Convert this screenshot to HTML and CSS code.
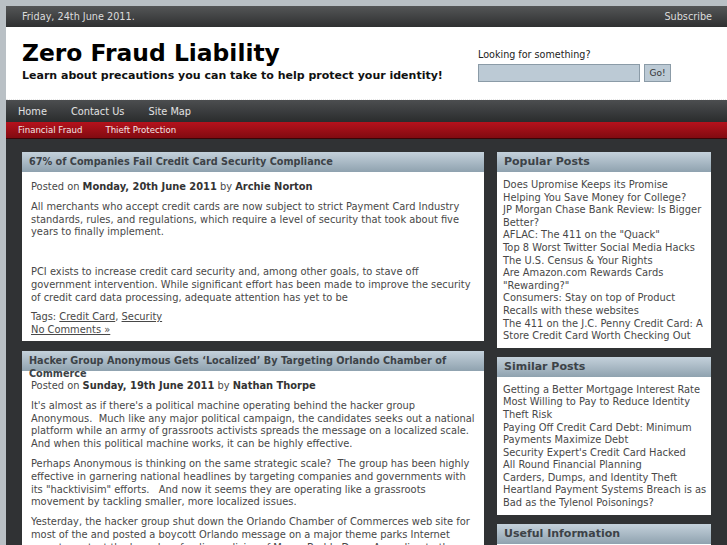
FILE: index.html
```html
<!DOCTYPE html>
<html lang="en">
<head>
  <meta charset="UTF-8">
  <title>Zero Fraud Liability</title>
  <link rel="stylesheet" href="styles.css">
</head>
<body>
  <div id="page">
    <!-- top bar -->
    <div class="topbar">
      <span>Friday, 24th June 2011.</span>
      <a href="#">Subscribe</a>
    </div>

    <!-- header -->
    <div class="header">
      <div class="branding">
        <h1>Zero Fraud Liability</h1>
        <p class="tagline">Learn about precautions you can take to help protect your identity!</p>
      </div>
      <form class="search">
        <label for="s">Looking for something?</label>
        <div class="search-row">
          <input type="text" id="s">
          <button type="button">Go!</button>
        </div>
      </form>
    </div>

    <!-- menus -->
    <div class="nav">
      <a href="#">Home</a>
      <a href="#">Contact Us</a>
      <a href="#">Site Map</a>
    </div>
    <div class="subnav">
      <a href="#">Financial Fraud</a>
      <a href="#">Thieft Protection</a>
    </div>

    <div class="main">
      <div class="posts">
        <div class="post">
          <h2>67% of Companies Fail Credit Card Security Compliance</h2>
          <div class="post-body">
            <p class="meta">Posted on <b>Monday, 20th June 2011</b> by <b>Archie Norton</b></p>
            <p>All merchants who accept credit cards are now subject to strict Payment Card Industry standards, rules, and regulations, which require a level of security that took about five years to finally implement.</p>
            <p>&nbsp;</p>
            <p>PCI exists to increase credit card security and, among other goals, to stave off government intervention. While significant effort has been made to improve the security of credit card data processing, adequate attention has yet to be</p>
            <p class="tags">Tags: <a href="#">Credit Card</a>, <a href="#">Security</a><br><a href="#">No Comments &raquo;</a></p>
          </div>
        </div>

        <div class="post">
          <h2>Hacker Group Anonymous Gets &lsquo;Localized&rsquo; By Targeting Orlando Chamber of Commerce</h2>
          <div class="post-body">
            <p class="meta">Posted on <b>Sunday, 19th June 2011</b> by <b>Nathan Thorpe</b></p>
            <p>It's almost as if there's a political machine operating behind the hacker group Anonymous.&nbsp; Much like any major political campaign, the candidates seeks out a national platform while an army of grassroots activists spreads the message on a localized scale.&nbsp; And when this political machine works, it can be highly effective.</p>
            <p>Perhaps Anonymous is thinking on the same strategic scale?&nbsp; The group has been highly effective in garnering national headlines by targeting companies and governments with its "hacktivisim" efforts.&nbsp;&nbsp; And now it seems they are operating like a grassroots movement by tackling smaller, more localized issues.</p>
            <p>Yesterday, the hacker group shut down the Orlando Chamber of Commerces web site for most of the and posted a boycott Orlando message on a major theme parks Internet page to protect the homeless feeding policies of Mayor Buddy Dyer.&nbsp; According to the</p>
          </div>
        </div>
      </div>

      <div class="sidebar">
        <div class="widget">
          <h3>Popular Posts</h3>
          <ul>
            <li><a href="#">Does Upromise Keeps its Promise Helping You Save Money for College?</a></li>
            <li><a href="#">JP Morgan Chase Bank Review: Is Bigger Better?</a></li>
            <li><a href="#">AFLAC: The 411 on the "Quack"</a></li>
            <li><a href="#">Top 8 Worst Twitter Social Media Hacks</a></li>
            <li><a href="#">The U.S. Census &amp; Your Rights</a></li>
            <li><a href="#">Are Amazon.com Rewards Cards "Rewarding?"</a></li>
            <li><a href="#">Consumers: Stay on top of Product Recalls with these websites</a></li>
            <li><a href="#">The 411 on the J.C. Penny Credit Card: A Store Credit Card Worth Checking Out</a></li>
          </ul>
        </div>
        <div class="widget">
          <h3>Similar Posts</h3>
          <ul>
            <li><a href="#">Getting a Better Mortgage Interest Rate</a></li>
            <li><a href="#">Most Willing to Pay to Reduce Identity Theft Risk</a></li>
            <li><a href="#">Paying Off Credit Card Debt: Minimum Payments Maximize Debt</a></li>
            <li><a href="#">Security Expert's Credit Card Hacked</a></li>
            <li><a href="#">All Round Financial Planning</a></li>
            <li><a href="#">Carders, Dumps, and Identity Theft</a></li>
            <li><a href="#">Heartland Payment Systems Breach is as Bad as the Tylenol Poisonings?</a></li>
          </ul>
        </div>
        <div class="widget">
          <h3>Useful Information</h3>
          <ul>
            <li><a href="#">About Zero Fraud Liability</a></li>
          </ul>
        </div>
      </div>
    </div>
  </div>
</body>
</html>
```

FILE: styles.css
```css
/* === base === */
html {
  overflow: hidden;
}

body {
  margin: 6px 0 0 6px;
  background: #b9c0c5;
  font-family: 'DejaVu Sans', sans-serif;
  font-size: 9.9px;
  color: #484848;
}

a {
  color: inherit;
  text-decoration: none;
}

#page {
  width: 760px;
  background: #303234;
}

/* === top bar === */
.topbar {
  height: 21px;
  display: flex;
  align-items: center;
  justify-content: space-between;
  padding: 0 54px 0 16px;
  background: linear-gradient(#545657, #2f3031);
  color: #dcdcdc;
  font-size: 9.7px;
}

/* === header === */
.header {
  height: 72px;
  background: #fff;
  border-bottom: 1px dotted #e6e6e6;
  display: flex;
  justify-content: space-between;
  padding: 0 46px 0 16px;
}

.branding h1 {
  margin: 13px 0 0;
  font-size: 23.4px;
  line-height: 27px;
  color: #000;
}

.tagline {
  margin: 2px 0 0;
  font-size: 11px;
  font-weight: bold;
  color: #111;
}

.search {
  width: 200px;
  padding-top: 22px;
  margin-right: 42px;
}

.search label {
  display: block;
  font-size: 9.6px;
  color: #222;
  margin-bottom: 4px;
}

.search-row {
  display: flex;
  gap: 4px;
}

.search input {
  width: 162px;
  height: 18px;
  box-sizing: border-box;
  margin: 0;
  border: 1px solid #8b9ba7;
  background: #bccad5;
}

.search button {
  height: 18px;
  width: 27px;
  padding: 0;
  border: 1px solid #8b9ba7;
  background: #bccad5;
  font-family: 'DejaVu Sans', sans-serif;
  font-size: 9px;
  color: #333;
}

/* === menus === */
.nav {
  height: 22px;
  display: flex;
  align-items: center;
  gap: 24px;
  padding-left: 12px;
  background: linear-gradient(#4c4e50, #2a2c2d);
  font-size: 9.8px;
}

.nav a {
  color: #e2e2e2;
}

.subnav {
  height: 16px;
  display: flex;
  align-items: center;
  gap: 23px;
  padding-left: 12px;
  background: linear-gradient(#b5121c, #820b11);
  border-bottom: 1px solid #3a0508;
  font-size: 8.6px;
}

.subnav a {
  color: #f3e6e6;
}

/* === main columns === */
.main {
  display: flex;
  gap: 13px;
  padding: 13px 0 0 16px;
  align-items: flex-start;
}

.posts {
  width: 462px;
  display: flex;
  flex-direction: column;
  gap: 10px;
}

.post h2,
.widget h3 {
  margin: 0;
  height: 20px;
  box-sizing: border-box;
  background: linear-gradient(#c4d1db, #8fa2af);
  color: #3c4247;
}

.post h2 {
  padding: 3px 7px 0;
  font-size: 9.7px;
  line-height: 13px;
}

.post-body {
  background: #fff;
  padding: 9px 9px 4px;
  line-height: 12.8px;
}

.post-body p {
  margin: 0 0 7px;
}

.post-body b {
  color: #333;
}

.post .tags {
  margin-bottom: 0;
}

.tags a {
  text-decoration: underline;
}

/* === sidebar === */
.sidebar {
  width: 214px;
  display: flex;
  flex-direction: column;
  gap: 9px;
}

.widget h3 {
  padding: 2px 7px 0;
  font-size: 11px;
  line-height: 16px;
}

.widget ul {
  list-style: none;
  margin: 0;
  padding: 7px 4px 5px 6px;
  background: #fff;
  line-height: 12.6px;
}
```
